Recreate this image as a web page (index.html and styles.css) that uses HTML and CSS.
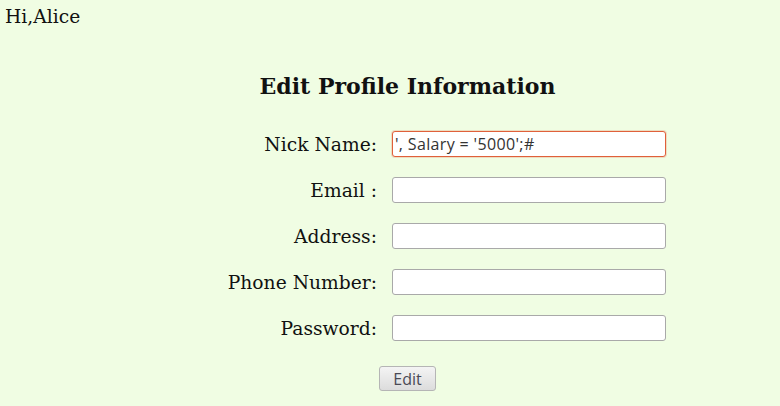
FILE: index.html
```html
<!DOCTYPE html>
<html>
<head>
<meta charset="utf-8">
<link rel="stylesheet" href="styles.css">
</head>
<body>
<div class="greet">Hi,Alice</div>
<h3 class="title">Edit Profile Information</h3>
<form class="form">
  <label class="lbl">Nick Name:</label>
  <input class="field focus" type="text" value="', Salary = '5000';#">
  <label class="lbl">Email :</label>
  <input class="field" type="text">
  <label class="lbl">Address:</label>
  <input class="field" type="text">
  <label class="lbl">Phone Number:</label>
  <input class="field" type="text">
  <label class="lbl">Password:</label>
  <input class="field" type="password">
  <div class="actions"><button class="btn" type="button">Edit</button></div>
</form>
</body>
</html>
```
FILE: styles.css
```css
html, body {
  margin: 0;
  background: #f0fde3;
}
body {
  font-family: "DejaVu Serif", serif;
  color: #111;
  font-size: 18.7px;
  padding: 6px 5px 0;
}
.greet {
  line-height: 22px;
}
.title {
  margin: 45px 0 0;
  font-size: 22px;
  text-align: center;
  padding-left: 35px;
  line-height: 26px;
}
.form {
  display: grid;
  grid-template-columns: 150px 274px;
  column-gap: 15px;
  row-gap: 20px;
  margin: 32px 0 0 222px;
  align-items: center;
}
.lbl {
  text-align: right;
  font-size: 18.7px;
  white-space: nowrap;
}
.field {
  box-sizing: border-box;
  width: 274px;
  height: 26px;
  border: 1px solid #a9a9a9;
  border-radius: 3px;
  background: #fff;
  font-family: "Open Sans", "DejaVu Sans", sans-serif;
  font-size: 16px;
  padding: 0 2px;
  color: #333;
  letter-spacing: 0.35px;
}
.field.focus {
  border-color: #e0603a;
  box-shadow: 0 0 0 1px rgba(224, 96, 58, 0.2);
}
.actions {
  grid-column: 1 / 3;
  display: flex;
  justify-content: center;
  margin-left: -78px;
  margin-top: 5px;
}
.btn {
  box-sizing: border-box;
  width: 57px;
  height: 25px;
  border: 1px solid #b5b5b5;
  border-radius: 3px;
  background: linear-gradient(#f4f4f4, #dcdcdc);
  font-family: "Open Sans", "DejaVu Sans", sans-serif;
  font-size: 16px;
  color: #4a4a55;
  padding: 0;
  line-height: 20px;
}
```
